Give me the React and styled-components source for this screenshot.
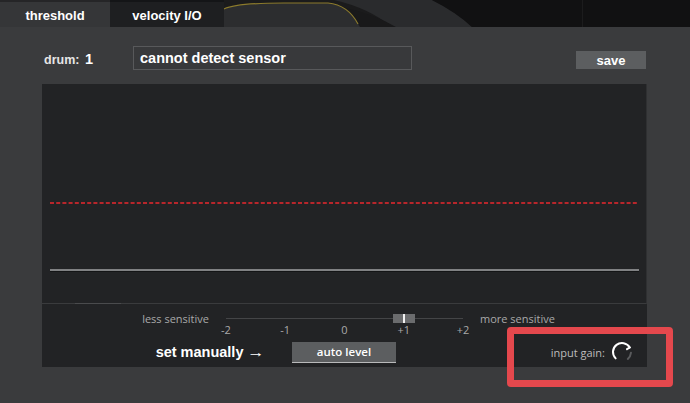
import React from 'react';
import styled, { createGlobalStyle } from 'styled-components';

const GlobalStyle = createGlobalStyle`
  body {
    margin: 0;
    background: #3a3b3d;
    overflow: hidden;
  }
`;

const Page = styled.div`
  position: relative;
  width: 690px;
  height: 403px;
  background: #3a3b3d;
  font-family: "Liberation Sans", Arial, sans-serif;
  color: #fff;
`;

const TabBar = styled.div`
  display: flex;
  height: 27px;
  background: #111;
`;

const Tab = styled.div`
  width: ${p => p.$width}px;
  display: flex;
  align-items: center;
  justify-content: center;
  padding-top: 1px;
  box-sizing: border-box;
  background: ${p => (p.$active ? '#353638' : '#1e1f21')};
  border-top: 2px solid rgba(0, 0, 0, 0.3);
  font-size: 13px;
  font-weight: 700;
  color: #fff;
`;

const Backdrop = styled.svg`
  flex: 1;
  height: 27px;
  display: block;
`;

const Main = styled.div`
  padding: 0 43px 0 42px;
`;

const HeaderRow = styled.div`
  display: flex;
  align-items: center;
  height: 24px;
  margin: 19px 0 14px;
  padding: 0 1px 0 2px;
`;

const DrumLabel = styled.div`
  width: 89px;
  padding-top: 2px;
  font-size: 12.5px;
  font-weight: 700;
  color: #e6e6e6;

  b {
    margin-left: 2px;
    font-size: 14.5px;
    color: #fff;
  }
`;

const SensorField = styled.div`
  width: 279px;
  height: 24px;
  box-sizing: border-box;
  border: 1px solid #58595b;
  background: #38393b;
  padding-left: 6px;
  display: flex;
  align-items: center;
  font-size: 14.5px;
  font-weight: 700;
  color: #fff;
`;

const SaveButton = styled.button`
  margin: 4px 0 0 auto;
  width: 70px;
  height: 18px;
  border: 0;
  padding: 0;
  background: #5c5e60;
  color: #fff;
  font-family: "Liberation Sans", Arial, sans-serif;
  font-size: 13px;
  font-weight: 700;
`;

const Panel = styled.div`
  display: flex;
  flex-direction: column;
  height: 283px;
  background: #222325;
`;

const Chart = styled.div`
  position: relative;
  height: 219px;
  border-bottom: 1px solid #3a3b3d;
  border-right: 1px solid #2f3032;
`;

const ChartSvg = styled.svg`
  display: block;
  width: 100%;
  height: 100%;
`;

const ScrollMark = styled.div`
  position: absolute;
  left: 33px;
  bottom: -1px;
  width: 46px;
  height: 1px;
  background: #4a4b4d;
`;

const Controls = styled.div`
  flex: 1;
  padding-top: 8px;
`;

const SliderRow = styled.div`
  display: flex;
  align-items: flex-start;
  height: 29px;
`;

const SideLabel = styled.div`
  font-family: "Open Sans", sans-serif;
  font-size: 11px;
  line-height: 14px;
  color: #a9a9a9;
  width: ${p => (p.$left ? '167px' : 'auto')};
  text-align: ${p => (p.$left ? 'right' : 'left')};
  margin-left: ${p => (p.$left ? '0' : '17px')};
`;

const Track = styled.div`
  width: 237px;
  margin-left: 17px;
`;

const Rail = styled.div`
  position: relative;
  height: 11px;

  &::before {
    content: '';
    position: absolute;
    left: 0;
    right: 0;
    top: 6px;
    height: 1px;
    background: #444547;
  }
`;

const Thumb = styled.div`
  position: absolute;
  left: 167px;
  top: 2px;
  width: 22px;
  height: 9px;
  background: #6b6c6e;

  &::after {
    content: '';
    position: absolute;
    left: 10px;
    top: 0;
    width: 2px;
    height: 9px;
    background: #f2f2f2;
  }
`;

const Ticks = styled.div`
  display: flex;
  justify-content: space-between;
  margin: 0 -20px;
`;

const Tick = styled.span`
  width: 40px;
  text-align: center;
  font-family: "Open Sans", sans-serif;
  font-size: 11px;
  line-height: 14px;
  color: #a9a9a9;
`;

const BottomRow = styled.div`
  display: flex;
  align-items: center;
  height: 22px;
`;

const ManualLabel = styled.div`
  width: 222px;
  text-align: right;
  font-size: 14.5px;
  font-weight: 700;
  color: #fff;

  span {
    margin-left: 2px;
    display: inline-block;
    transform: scaleX(1.2);
    transform-origin: right center;
  }
`;

const AutoButton = styled.button`
  margin-left: 28px;
  width: 104px;
  height: 21px;
  padding: 0;
  border: 0;
  border-bottom: 1px solid #b9babb;
  background: #5c5e60;
  color: #fff;
  font-family: "Open Sans", sans-serif;
  font-size: 11.5px;
  font-weight: 600;
`;

const GainGroup = styled.div`
  margin-left: auto;
  padding-right: 13px;
  display: flex;
  align-items: center;
  gap: 5px;
  font-family: "Open Sans", sans-serif;
  font-size: 11px;
  color: #bcbcbc;
`;

const Annotation = styled.div`
  position: absolute;
  left: 507px;
  top: 327px;
  width: 166px;
  height: 60px;
  box-sizing: border-box;
  border: 7px solid #e4484d;
  border-radius: 4px;
`;

const Knob = () => (
  <svg width="24" height="24" viewBox="0 0 24 24">
    <path d="M5.64 18.36 A9 9 0 1 1 19.79 7.5" fill="none" stroke="#fff" strokeWidth="2" strokeLinecap="round" />
    <path d="M19.79 7.5 L17 9.2" stroke="#fff" strokeWidth="2" strokeLinecap="round" />
    <path d="M20.96 12.78 A9 9 0 0 1 17.79 18.89" fill="none" stroke="#5a5b5d" strokeWidth="2" strokeLinecap="round" />
  </svg>
);

const App = () => {
  const ticks = ['-2', '-1', '0', '+1', '+2'];
  return (
    <Page>
      <GlobalStyle />
      <TabBar>
        <Tab $width={110} $active>threshold</Tab>
        <Tab $width={114}>velocity I/O</Tab>
        <Backdrop viewBox="0 0 466 27" preserveAspectRatio="none">
          <rect width="466" height="27" fill="#1b1b1c" />
          <path d="M110,0 L208,0 Q232,12 248,27 L168,27 Q145,8 110,0 Z" fill="#2a2b2d" />
          <path d="M0,27 L0,9 Q12,3 60,3 L104,3 Q126,5 138,27 Z" fill="#2c2d2f" />
          <path d="M118,7 Q150,14 172,27 L136,27 Q130,14 118,7 Z" fill="#19191a" />
          <path d="M0,9 Q12,3 60,3 L104,3 Q124,5 134,24" fill="none" stroke="#8b7a2c" strokeWidth="1.2" />
          <path d="M208,0 Q232,12 248,27 L466,27 L466,0 Z" fill="#111112" />
          <line x1="358.5" y1="0" x2="358.5" y2="27" stroke="#1c1c1d" />
        </Backdrop>
      </TabBar>
      <Main>
        <HeaderRow>
          <DrumLabel>
            drum: <b>1</b>
          </DrumLabel>
          <SensorField>cannot detect sensor</SensorField>
          <SaveButton>save</SaveButton>
        </HeaderRow>
        <Panel>
          <Chart>
            <ChartSvg viewBox="0 0 604 219" preserveAspectRatio="none">
              <line x1="8" y1="119" x2="596" y2="119" stroke="#b8262b" strokeWidth="2" strokeDasharray="4 2.2" />
              <rect x="8" y="185" width="589" height="2" fill="#808183" />
              <rect x="8" y="187" width="589" height="1" fill="#141516" />
            </ChartSvg>
            <ScrollMark />
          </Chart>
          <Controls>
            <SliderRow>
              <SideLabel $left>less sensitive</SideLabel>
              <Track>
                <Rail>
                  <Thumb />
                </Rail>
                <Ticks>
                  {ticks.map(t => (
                    <Tick key={t}>{t}</Tick>
                  ))}
                </Ticks>
              </Track>
              <SideLabel>more sensitive</SideLabel>
            </SliderRow>
            <BottomRow>
              <ManualLabel>
                set manually <span>→</span>
              </ManualLabel>
              <AutoButton>auto level</AutoButton>
              <GainGroup>
                input gain:
                <Knob />
              </GainGroup>
            </BottomRow>
          </Controls>
        </Panel>
      </Main>
      <Annotation />
    </Page>
  );
};

export default App;
